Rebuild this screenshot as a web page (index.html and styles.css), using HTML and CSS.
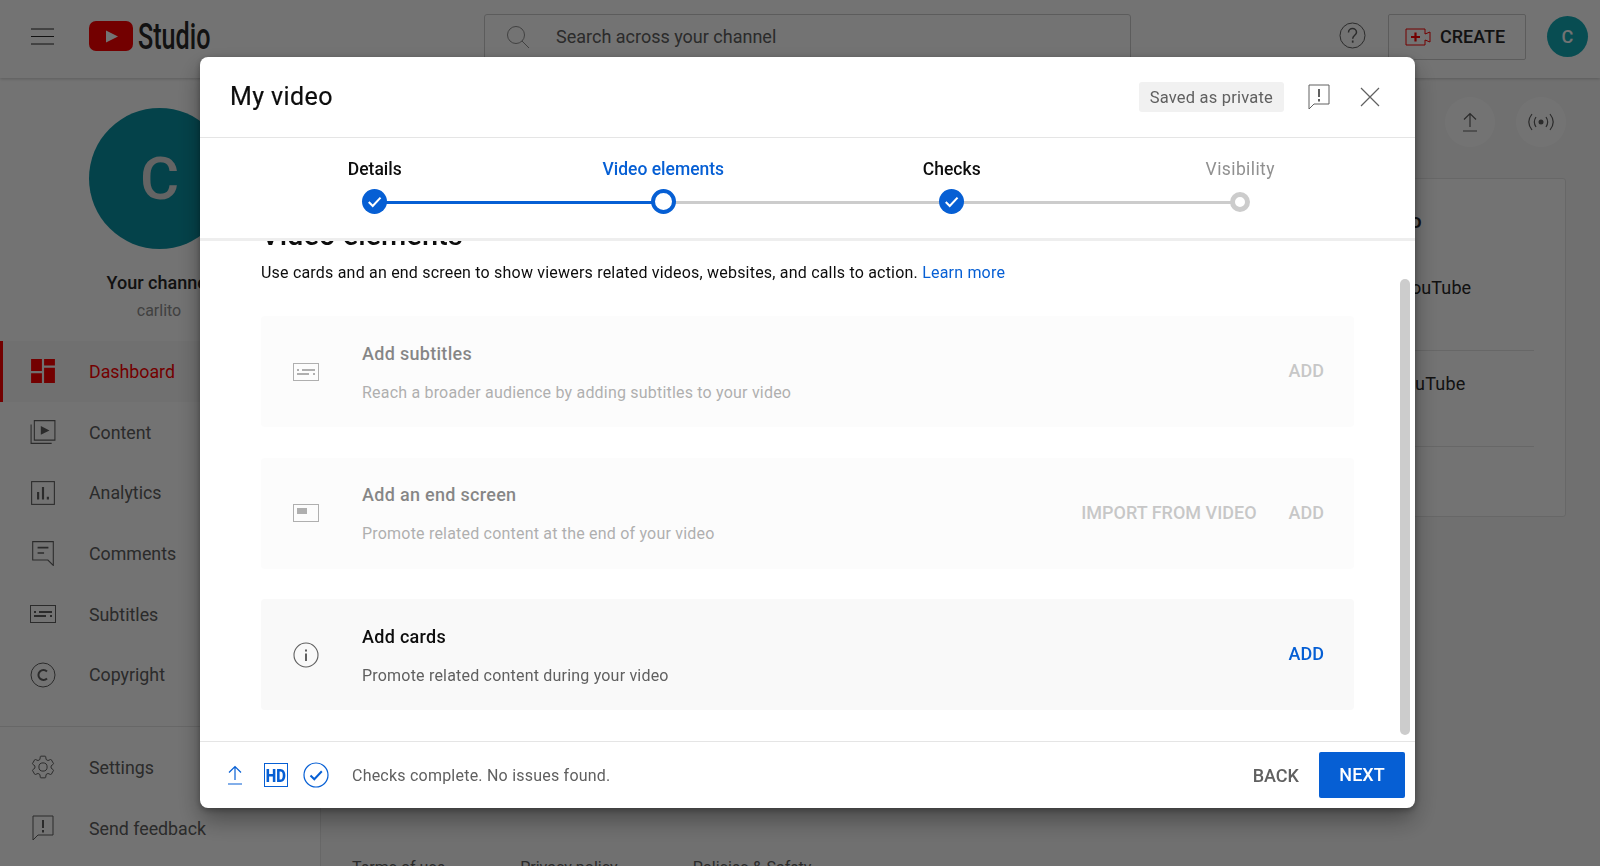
FILE: index.html
```html
<!DOCTYPE html>
<html lang="en">
<head>
    <meta charset="UTF-8">
    <title>YouTube Studio - My video</title>
    <link rel="stylesheet" href="styles.css">
</head>
<body>
    <svg class="sprite" width="0" height="0">
        <defs>
            <symbol id="i-subtitles" viewBox="0 0 26 18">
                <rect x="0.5" y="0.5" width="25" height="17" fill="none" stroke="currentColor"/>
                <path d="M4 7h2M9 7h13M4 11h12M20 11h2" fill="none" stroke="currentColor" stroke-width="2"/>
            </symbol>
            <symbol id="i-feedback" viewBox="0 0 22 26">
                <path d="M1 1h20v19H6l-5 5z" fill="none" stroke="currentColor"/>
                <path d="M11 5v8M11 15v2.5" fill="none" stroke="currentColor" stroke-width="2"/>
            </symbol>
            <symbol id="i-upload" viewBox="0 0 16 20">
                <path d="M8 15V1.5M2 7.500l6-6 6 6M1 19h14" fill="none" stroke="currentColor" stroke-width="1.2"/>
            </symbol>
            <symbol id="i-check" viewBox="0 0 24 24">
                <path d="M6.500 12.500l3.800 3.800 7.500-8" fill="none" stroke="currentColor" stroke-width="2"/>
            </symbol>
        </defs>
    </svg>

    <div class="topbar">
        <svg class="hamburger" width="24" height="17" viewBox="0 0 24 17"><path d="M0 1h23M0 8.500h23M0 16h23" fill="none" stroke="#282828"/></svg>
        <div class="logo">
            <svg width="44" height="30" viewBox="0 0 44 30"><rect width="44" height="30" rx="7" fill="#f00"/><path d="M17 9.500l12 6-12 6z" fill="#fff"/></svg>
            <span class="logo-text">Studio</span>
        </div>
        <div class="search">
            <svg width="26" height="24" viewBox="0 0 26 24"><circle cx="11" cy="10" r="8.500" fill="none" stroke="#909090"/><path d="M17 16l7 7" stroke="#909090" fill="none"/></svg>
            <span>Search across your channel</span>
        </div>
        <svg class="help" width="27" height="27" viewBox="0 0 27 27">
            <circle cx="13.500" cy="13.500" r="12.500" fill="none" stroke="#606060"/>
            <path d="M9.500 10.500c0-2.500 2-4 4-4s4 1.500 4 3.800c0 3-3.800 3-3.800 6.500" fill="none" stroke="#606060" stroke-width="1.500"/>
            <path d="M13.700 18.500v2.200" stroke="#606060" stroke-width="1.700"/>
        </svg>
        <div class="create">
            <svg width="26" height="18" viewBox="0 0 26 18">
                <path d="M20 1H1v16h19v-5l5 2V4l-5 2z" fill="none" stroke="#f00"/>
                <path d="M10.500 4.500v9M6 9h9" stroke="#f00" stroke-width="2.200"/>
            </svg>
            <span>CREATE</span>
        </div>
        <div class="avatar-small">C</div>
    </div>

    <div class="layout">
        <div class="sidebar">
            <div class="profile">
                <div class="avatar-big">C</div>
                <div class="channel-name">Your channel</div>
                <div class="channel-user">carlito</div>
            </div>
            <div class="nav">
                <div class="nav-item nav-item-active">
                    <svg class="nav-icon" viewBox="0 0 24 24"><path d="M1 1h10v11H1zM13 1h10v6H13zM1 14h10v9H1zM13 9h10v14H13z" fill="#f00"/></svg>
                    <span>Dashboard</span>
                </div>
                <div class="nav-item">
                    <svg class="nav-icon" viewBox="0 0 24 24"><path d="M4 1.500h19v18H4zM1 5v17.500h19" fill="none" stroke="currentColor"/><path d="M10 6.500l8 4-8 4z" fill="currentColor"/></svg>
                    <span>Content</span>
                </div>
                <div class="nav-item">
                    <svg class="nav-icon" viewBox="0 0 24 24"><rect x="1.500" y="1.500" width="21" height="21" fill="none" stroke="currentColor"/><path d="M7.500 11v7M12 6.500V18M16.500 15.500V18" fill="none" stroke="currentColor" stroke-width="2"/></svg>
                    <span>Analytics</span>
                </div>
                <div class="nav-item">
                    <svg class="nav-icon" viewBox="0 0 24 24"><path d="M2.500 1.500h19v22l-5-5h-14z" fill="none" stroke="currentColor"/><path d="M7 7h10M7 12h6" fill="none" stroke="currentColor" stroke-width="1.500"/></svg>
                    <span>Comments</span>
                </div>
                <div class="nav-item">
                    <svg class="nav-icon nav-icon-wide"><use href="#i-subtitles"/></svg>
                    <span>Subtitles</span>
                </div>
                <div class="nav-item">
                    <svg class="nav-icon" viewBox="0 0 26 26"><circle cx="13" cy="13" r="12" fill="none" stroke="currentColor"/><path d="M17 9.500a5 5 0 1 0 0 7" fill="none" stroke="currentColor" stroke-width="2"/></svg>
                    <span>Copyright</span>
                </div>
            </div>
            <div class="nav nav-bottom">
                <div class="nav-item">
                    <svg class="nav-icon" viewBox="0 0 24 24"><path d="M19.430 12.980c.04-.32.07-.64.07-.98s-.03-.66-.07-.98l2.110-1.650c.19-.15.24-.42.12-.64l-2-3.460c-.12-.22-.39-.3-.61-.22l-2.490 1c-.52-.4-1.080-.73-1.690-.98l-.38-2.650C14.460 2.180 14.250 2 14 2h-4c-.25 0-.46.18-.49.42l-.38 2.650c-.61.25-1.170.59-1.690.98l-2.490-1c-.23-.09-.49 0-.61.22l-2 3.460c-.13.22-.07.49.12.64l2.110 1.650c-.04.32-.07.65-.07.98s.03.66.07.98l-2.110 1.650c-.19.15-.24.42-.12.64l2 3.460c.12.22.39.3.61.22l2.490-1c.52.4 1.080.73 1.690.98l.38 2.650c.03.24.24.42.49.42h4c.25 0 .46-.18.49-.42l.38-2.650c.61-.25 1.170-.59 1.690-.98l2.490 1c.23.09.49 0 .61-.22l2-3.460c.12-.22.07-.49-.12-.64l-2.110-1.650z" fill="none" stroke="currentColor" stroke-width=".9"/><circle cx="12" cy="12" r="3.800" fill="none" stroke="currentColor" stroke-width=".9"/></svg>
                    <span>Settings</span>
                </div>
                <div class="nav-item">
                    <svg class="nav-icon"><use href="#i-feedback"/></svg>
                    <span>Send feedback</span>
                </div>
            </div>
        </div>

        <div class="main">
            <div class="main-actions">
                <div class="round-btn"><svg width="16" height="20"><use href="#i-upload"/></svg></div>
                <div class="round-btn">
                    <svg width="28" height="20" viewBox="0 0 28 20">
                        <path d="M5 2C1 7 1 13 5 18M9 5c-2 3-2 7 0 10M23 2c4 5 4 11 0 16M19 5c2 3 2 7 0 10" fill="none" stroke="currentColor" stroke-width="1.200"/>
                        <circle cx="14" cy="10" r="2.500" fill="currentColor"/>
                    </svg>
                </div>
            </div>
            <div class="news-card">
                <div class="news-title">What's new in Studio</div>
                <div class="news-row">Ideas for creators on YouTube</div>
                <div class="news-row">The latest tips from YouTube</div>
                <div class="news-row"></div>
            </div>
            <div class="main-footer">
                <span>Terms of use</span>
                <span>Privacy policy</span>
                <span>Policies &amp; Safety</span>
            </div>
        </div>
    </div>

    <div class="overlay"></div>

    <div class="dialog">
        <div class="dialog-head">
            <h1 class="dialog-title">My video</h1>
            <span class="saved-chip">Saved as private</span>
            <svg class="head-feedback"><use href="#i-feedback"/></svg>
            <svg class="head-close" width="20" height="20" viewBox="0 0 20 20"><path d="M1 1l18 18M19 1L1 19" fill="none" stroke="#606060" stroke-width="1.200"/></svg>
        </div>

        <div class="stepper">
            <div class="step step-done step-line-blue">
                <span class="step-label">Details</span>
                <span class="step-dot"><svg width="25" height="25"><use href="#i-check"/></svg></span>
            </div>
            <div class="step step-current">
                <span class="step-label">Video elements</span>
                <span class="step-dot"></span>
            </div>
            <div class="step step-done">
                <span class="step-label">Checks</span>
                <span class="step-dot"><svg width="25" height="25"><use href="#i-check"/></svg></span>
            </div>
            <div class="step step-todo">
                <span class="step-label">Visibility</span>
                <span class="step-dot"></span>
            </div>
        </div>

        <div class="content">
            <h2 class="content-title">Video elements</h2>
            <p class="content-desc">Use cards and an end screen to show viewers related videos, websites, and calls to action. <a class="link" href="#">Learn more</a></p>

            <div class="el-card el-card-disabled">
                <svg class="el-icon"><use href="#i-subtitles"/></svg>
                <div class="el-text">
                    <div class="el-title">Add subtitles</div>
                    <div class="el-desc">Reach a broader audience by adding subtitles to your video</div>
                </div>
                <span class="el-action">ADD</span>
            </div>

            <div class="el-card el-card-disabled">
                <svg class="el-icon" viewBox="0 0 26 18"><rect x="0.500" y="0.500" width="25" height="17" fill="none" stroke="currentColor"/><rect x="4" y="4" width="10" height="6" fill="currentColor"/></svg>
                <div class="el-text">
                    <div class="el-title">Add an end screen</div>
                    <div class="el-desc">Promote related content at the end of your video</div>
                </div>
                <span class="el-action">IMPORT FROM VIDEO</span>
                <span class="el-action">ADD</span>
            </div>

            <div class="el-card">
                <svg class="el-icon el-icon-round" viewBox="0 0 26 26"><circle cx="13" cy="13" r="12" fill="none" stroke="currentColor" stroke-width="1.100"/><path d="M13 11.500V19M13 7.500v2" fill="none" stroke="currentColor" stroke-width="2"/></svg>
                <div class="el-text">
                    <div class="el-title">Add cards</div>
                    <div class="el-desc">Promote related content during your video</div>
                </div>
                <span class="el-action">ADD</span>
            </div>

            <div class="scrollbar"></div>
        </div>

        <div class="dialog-foot">
            <svg class="foot-upload" width="16" height="20"><use href="#i-upload"/></svg>
            <span class="hd-badge"><span>HD</span></span>
            <svg class="foot-check" width="26" height="26" viewBox="0 0 26 26"><circle cx="13" cy="13" r="12" fill="none" stroke="currentColor" stroke-width="1.200"/><path d="M7.500 13.500l3.800 3.800 7.500-8" fill="none" stroke="currentColor" stroke-width="2"/></svg>
            <span class="foot-status">Checks complete. No issues found.</span>
            <span class="btn-back">BACK</span>
            <span class="btn-next">NEXT</span>
        </div>
    </div>
</body>
</html>
```

FILE: styles.css
```css
* {
    margin: 0;
    padding: 0;
    box-sizing: border-box;
}
html, body {
    height: 100%;
    overflow: hidden;
}
body {
    font-family: Roboto, "Noto Sans", Arial, sans-serif;
    background: #f9f9f9;
    color: #282828;
}
.sprite {
    display: block;
    height: 0;
}

/* page behind the dialog */
.topbar {
    height: 78px;
    background: #fff;
    display: flex;
    align-items: center;
    padding-left: 31px;
    box-shadow: 0 1px 3px rgba(0,0,0,0.2);
    position: relative;
    z-index: 1;
}
.hamburger {
    flex: none;
    margin-top: -6px;
}
.logo {
    display: flex;
    align-items: center;
    margin-left: 34px;
    width: 395px;
    flex: none;
    margin-top: -6px;
}
.logo-text {
    display: inline-block;
    font-size: 37px;
    font-weight: 500;
    margin-left: 5px;
    transform: scaleX(0.68);
    transform-origin: left center;
}
.search {
    width: 647px;
    height: 46px;
    flex: none;
    border: 1px solid #ccc;
    border-radius: 3px;
    display: flex;
    align-items: center;
    padding-left: 20px;
    gap: 25px;
    color: #606060;
    font-size: 18px;
    margin-top: -5px;
}
.help {
    flex: none;
    margin-left: 208px;
    margin-top: -7px;
}
.create {
    flex: none;
    width: 138px;
    height: 46px;
    margin-left: 22px;
    margin-top: -5px;
    border: 1px solid #ccc;
    border-radius: 2px;
    display: flex;
    align-items: center;
    padding-left: 16px;
    gap: 9px;
    font-size: 18px;
    font-weight: 500;
}
.avatar-small {
    flex: none;
    width: 41px;
    height: 41px;
    margin-left: 21px;
    margin-top: -6px;
    border-radius: 50%;
    background: #13aab7;
    color: #fff;
    display: flex;
    align-items: center;
    justify-content: center;
    font-size: 18px;
    font-weight: 500;
}
.layout {
    display: flex;
    height: 788px;
}
.sidebar {
    width: 321px;
    flex: none;
    background: #fff;
    border-right: 1px solid #e5e5e5;
    overflow: hidden;
}
.profile {
    height: 263px;
    padding-top: 30px;
    text-align: center;
}
.avatar-big {
    width: 141px;
    height: 141px;
    margin: 0 0 0 89px;
    border-radius: 50%;
    background: #0b93a4;
    color: #ddd;
    font-size: 60px;
    font-weight: 500;
    line-height: 141px;
}
.channel-name {
    font-size: 18px;
    font-weight: 500;
    line-height: 24px;
    margin-top: 22px;
    margin-right: 2px;
}
.channel-user {
    font-size: 16px;
    color: #909090;
    line-height: 24px;
    margin-top: 4px;
    margin-right: 2px;
}
.nav {
    padding-bottom: 21px;
}
.nav-bottom {
    border-top: 1px solid #e5e5e5;
    padding: 10px 0 0;
}
.nav-item {
    height: 60.700px;
    display: flex;
    align-items: center;
    padding-left: 30px;
    gap: 33px;
    color: #606060;
    font-size: 17.800px;
}
.nav-item-active {
    color: #f00;
    background: #f9f9f9;
    box-shadow: inset 3px 0 0 #f00;
}
.nav-icon {
    width: 26px;
    height: 26px;
    flex: none;
    color: #606060;
}
.nav-icon-wide {
    height: 18px;
}
.main {
    flex: 1;
    display: flex;
    flex-direction: column;
    padding: 19px 34px 0 31px;
    min-width: 0;
}
.main-actions {
    display: flex;
    justify-content: flex-end;
    gap: 21px;
}
.round-btn {
    width: 50px;
    height: 50px;
    border-radius: 50%;
    background: #fff;
    color: #606060;
    display: flex;
    align-items: center;
    justify-content: center;
}
.news-card {
    width: 370px;
    height: 339px;
    margin-top: 31px;
    align-self: flex-end;
    background: #fff;
    border: 1px solid #e5e5e5;
    border-radius: 3px;
    padding: 28px 31px 0;
}
.news-title {
    font-size: 21px;
    font-weight: 500;
    line-height: 28px;
    height: 48px;
    white-space: nowrap;
}
.news-row {
    height: 96px;
    font-size: 18px;
    letter-spacing: 0.1px;
    padding-top: 22px;
    border-bottom: 1px solid #e5e5e5;
}
.news-row + .news-row {
    letter-spacing: 0.25px;
}
.news-row:last-child {
    border-bottom: 0;
}
.main-footer {
    margin-top: 339px;
    display: flex;
    gap: 75px;
    font-size: 16px;
    color: #606060;
    line-height: 24px;
}
.overlay {
    position: fixed;
    inset: 0;
    z-index: 5;
    background: rgba(0,0,0,0.55);
}

/* upload dialog */
.dialog {
    position: fixed;
    z-index: 6;
    left: 200px;
    top: 57px;
    width: 1215px;
    height: 751px;
    background: #fff;
    border-radius: 8px;
    display: flex;
    flex-direction: column;
    overflow: hidden;
    box-shadow: 0 12px 24px rgba(0,0,0,0.35), 0 2px 6px rgba(0,0,0,0.3);
}
.dialog-head {
    height: 81px;
    flex: none;
    display: flex;
    align-items: center;
    padding: 0 35px 0 30px;
    border-bottom: 1px solid #e5e5e5;
}
.dialog-title {
    font-size: 25px;
    font-weight: 400;
    letter-spacing: 0.4px;
    color: #0d0d0d;
    flex: 1;
    margin-top: -2px;
    -webkit-text-stroke: 0.2px #0d0d0d;
}
.saved-chip {
    background: #f1f1f1;
    color: #606060;
    height: 30px;
    line-height: 31px;
    padding: 0 11px;
    border-radius: 3px;
    font-size: 16.500px;
    letter-spacing: 0.2px;
}
.head-feedback {
    width: 22px;
    height: 26px;
    margin-left: 24px;
    color: #606060;
}
.head-close {
    margin-left: 30px;
}
.stepper {
    height: 103px;
    flex: none;
    display: grid;
    grid-template-columns: repeat(4, 288.500px);
    padding: 19px 0 0 30.500px;
    border-bottom: 3px solid #eee;
    position: relative;
    z-index: 1;
    background: #fff;
}
.step {
    display: flex;
    flex-direction: column;
    align-items: center;
    gap: 8px;
    position: relative;
}
.step-label {
    font-size: 17.500px;
    font-weight: 500;
    line-height: 24px;
    color: #0d0d0d;
}
.step-current .step-label {
    color: #065fd4;
}
.step-todo .step-label {
    color: #909090;
    font-weight: 400;
    letter-spacing: 0.4px;
}
.step:not(:last-child)::after {
    content: "";
    position: absolute;
    left: 50%;
    width: 100%;
    top: 43.500px;
    height: 3px;
    background: #ccc;
}
.step-line-blue:not(:last-child)::after {
    background: #065fd4;
}
.step-dot {
    width: 25px;
    height: 25px;
    border-radius: 50%;
    position: relative;
    z-index: 1;
    display: flex;
}
.step-done .step-dot {
    background: #065fd4;
    color: #fff;
}
.step-current .step-dot {
    background: #fff;
    border: 4.500px solid #065fd4;
}
.step-todo .step-dot {
    width: 20px;
    height: 20px;
    margin-top: 2.500px;
    background: #fff;
    border: 5px solid #ccc;
}
.content {
    flex: 1;
    min-height: 0;
    padding: 0 61px;
    overflow: hidden;
    position: relative;
}
.content-title {
    margin-top: -24px;
    font-size: 29px;
    font-weight: 500;
    line-height: 36px;
    color: #0d0d0d;
}
.content-desc {
    margin-top: 8px;
    font-size: 16px;
    line-height: 24px;
    letter-spacing: 0.2px;
    color: #0d0d0d;
}
.link {
    color: #065fd4;
    text-decoration: none;
}
.el-card {
    height: 111px;
    margin-top: 30.500px;
    background: #f9f9f9;
    border-radius: 4px;
    display: flex;
    align-items: center;
    padding: 0 30px 0 32px;
    gap: 32px;
}
.content-desc + .el-card {
    margin-top: 31px;
}
.el-card-disabled {
    opacity: 0.5;
}
.el-icon {
    width: 26px;
    height: 18px;
    flex: none;
    color: #606060;
}
.el-icon-round {
    height: 26px;
}
.el-text {
    flex: 1;
    margin-left: 11px;
    margin-top: 3px;
}
.el-title {
    font-size: 18px;
    font-weight: 500;
    line-height: 24px;
    letter-spacing: 0.3px;
    color: #0d0d0d;
}
.el-desc {
    margin-top: 15px;
    font-size: 16px;
    line-height: 24px;
    letter-spacing: 0.2px;
    color: #606060;
}
.el-action {
    font-size: 18px;
    font-weight: 500;
    color: #065fd4;
    margin-top: -2px;
}
.el-card-disabled .el-action {
    color: #909090;
}
.scrollbar {
    position: absolute;
    right: 5px;
    top: 38px;
    bottom: 6px;
    width: 10px;
    border-radius: 5px;
    background: #ccc;
}
.dialog-foot {
    height: 67px;
    flex: none;
    border-top: 1px solid #e5e5e5;
    display: flex;
    align-items: center;
    padding: 0 10px 0 27px;
}
.foot-upload {
    color: #065fd4;
}
.hd-badge {
    width: 24px;
    height: 24px;
    margin-left: 21px;
    border: 1px solid #065fd4;
    color: #065fd4;
    display: flex;
    align-items: center;
    justify-content: center;
    overflow: hidden;
    font-size: 19px;
    font-weight: 900;
    flex: none;
}
.hd-badge span {
    display: inline-block;
    transform: scaleX(0.78);
}
.foot-check {
    color: #065fd4;
    margin-left: 15px;
    flex: none;
}
.foot-status {
    flex: 1;
    margin-left: 23px;
    font-size: 16px;
    letter-spacing: 0.22px;
    color: #606060;
}
.btn-back {
    font-size: 18px;
    font-weight: 500;
    color: #606060;
    margin-right: 20px;
}
.btn-next {
    width: 86px;
    height: 46px;
    line-height: 46px;
    text-align: center;
    background: #065fd4;
    color: #fff;
    font-size: 18px;
    font-weight: 500;
    border-radius: 2px;
}
```
